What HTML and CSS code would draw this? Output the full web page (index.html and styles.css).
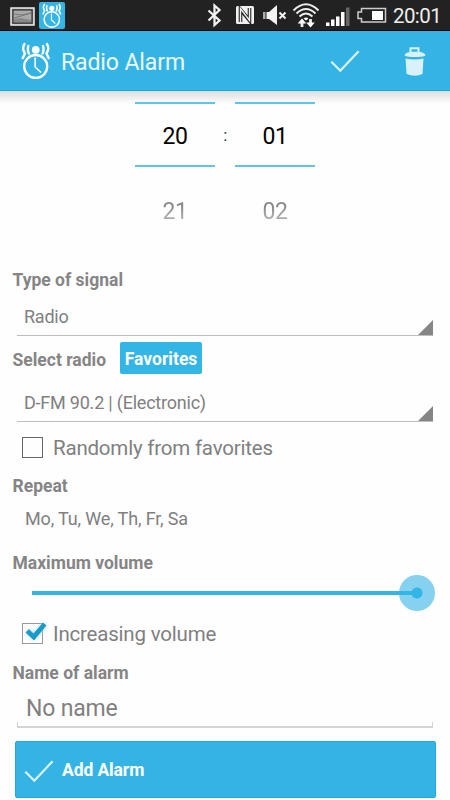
FILE: index.html
```html
<!DOCTYPE html>
<html lang="en">
<head>
<meta charset="utf-8">
<title>Radio Alarm</title>
<link rel="stylesheet" href="styles.css">
</head>
<body>
<svg class="defs" width="0" height="0" aria-hidden="true">
  <symbol id="alarm" viewBox="0 0 30 37">
    <g fill="none" stroke="currentColor" stroke-width="2.4">
      <circle cx="14.7" cy="24.500" r="11.500" stroke-width="2.300"/>
      <path d="M14.200 15.500v9.500l5.800 5.500" stroke-width="1.700"/>
      <path d="M4 1.200Q.2 6 3.900 11.500L1.300 17M7.600 3.200Q5.800 8 8.300 12.500M25.400 1.200Q29.200 6 25.500 11.500L28.100 17M21.800 3.200Q23.600 8 21.100 12.500"/>
    </g>
    <circle cx="14.700" cy="7.800" r="3.900" fill="currentColor"/>
  </symbol>
  <symbol id="check" viewBox="0 0 30 23">
    <path d="M1.300 11.800l9 8.900L28.600 1.300" fill="none" stroke="currentColor" stroke-width="2.300"/>
  </symbol>
</svg>

<header class="status">
  <svg class="picture" width="25" height="19" viewBox="0 0 25 19">
    <rect x="1" y="1" width="23" height="17" fill="#777" stroke="#eee" stroke-width="1.500"/>
    <rect x="3" y="3" width="19" height="13" fill="#aaa" stroke="#222"/>
    <path d="M4 11l7-2 10-3M4 7l8 1 9-2" fill="none" stroke="#777"/>
    <path d="M4 15v-3l7-1 10 2v2z" fill="#888"/>
  </svg>
  <span class="app-badge"><svg width="20" height="25"><use href="#alarm"/></svg></span>
  <svg class="tray" width="190" height="31" viewBox="200 0 190 31">
    <path d="M208.500 10.500l11 10-5 4.500V5.500l5 4.500-11 10.500" fill="none" stroke="#f2f2f2" stroke-width="2.300"/>
    <rect x="236" y="6" width="18" height="18" rx="1.500" fill="#f2f2f2"/>
    <path d="M240.500 22V9.500l9 11V8" fill="none" stroke="#222" stroke-width="3.600"/>
    <path d="M240.500 22V8.500l9 12V8" fill="none" stroke="#f2f2f2" stroke-width="1.400"/>
    <path d="M263 12h2.500v7H263z" fill="#aaa"/>
    <path d="M266.500 12h2.500l8-7v20l-8-6h-2.500z" fill="#f2f2f2"/>
    <path d="M279.500 12.500l6 6m0-6l-6 6" stroke="#f2f2f2" stroke-width="2"/>
    <g fill="none" stroke="#eee" stroke-width="2">
      <path d="M293.500 10.500q12.500-12.500 25 0M296.500 13.500q9.500-9 19 0M299.500 16.500q6.500-6 13 0"/>
      <path d="M302 27v-5M310.500 19v5" stroke-width="2.800"/>
    </g>
    <path d="M303.500 18.500q2.500-2 5 0l-2.500 2zM297.700 23.500l4.300-5 4.300 5zM306.200 22.500l4.300 5 4.300-5z" fill="#fff"/>
    <path d="M326 22.500h3.500V26H326zM331 19.500h3.500V26H331zM336 16.500h3.500V26H336zM341 12h3.500v14H341z" fill="#fff"/>
    <path d="M346 7.500h3.500V26H346z" fill="#666"/>
    <path d="M361.500 8.500h24v13.500h-24v-3.500h-3.500v-6.500h3.500z" fill="none" stroke="#ccc" stroke-width="1.500"/>
    <path d="M372 11h11v9h-11z" fill="#fff"/>
  </svg>
  <span class="clock">20:01</span>
</header>

<nav class="appbar">
  <svg class="logo" width="30" height="37"><use href="#alarm"/></svg>
  <h1>Radio Alarm</h1>
  <svg class="save" width="30" height="23"><use href="#check"/></svg>
  <svg class="trash" width="22" height="30" viewBox="0 0 22 30">
    <path d="M6.500 5V1.200h8V5" fill="none" stroke="#d8f1fb" stroke-width="2"/>
    <path d="M.5 8.500C.5 6 4 4.700 11 4.700S21.500 6 21.500 8.500c-3 2-18 2-21 0z" fill="#d8f1fb"/>
    <path d="M1.500 11.500q9.500 2 18 0L18.500 27q-7.500 3.500-16 0z" fill="#d8f1fb"/>
  </svg>
</nav>

<main>
  <section class="picker">
    <div class="wheel"><div class="current">20</div><div class="next">21</div></div>
    <div class="colon">:</div>
    <div class="wheel"><div class="current">01</div><div class="next">02</div></div>
  </section>

  <h2 class="type-title">Type of signal</h2>
  <div class="spinner type"><span>Radio</span></div>
  <div class="radio-row"><h2>Select radio</h2><button class="favorites">Favorites</button></div>
  <div class="spinner station"><span>D-FM 90.2 | (Electronic)</span></div>
  <label class="option random"><i class="box"></i><span>Randomly from favorites</span></label>
  <h2 class="repeat-title">Repeat</h2>
  <div class="days">Mo, Tu, We, Th, Fr, Sa</div>
  <h2 class="volume-title">Maximum volume</h2>
  <div class="slider"><div class="track"></div><div class="thumb"></div></div>
  <label class="option rising"><i class="box"><svg class="tick" width="26" height="24" viewBox="0 0 26 24"><path d="M4 12.500l3-3 4.500 4.500L21 3l3 2.500L12 20z" fill="#169bcb" stroke="#0b80ad" stroke-width=".6"/></svg></i><span>Increasing volume</span></label>
  <h2 class="name-title">Name of alarm</h2>
  <div class="field">No name</div>
  <button class="add"><svg width="30" height="23"><use href="#check"/></svg><span>Add Alarm</span></button>
</main>
</body>
</html>
```
FILE: styles.css
```css
* { box-sizing: border-box; }
body {
  margin: 0;
  width: 450px;
  height: 800px;
  overflow: hidden;
  background: #fefefe;
  color: #808080;
  font-family: Roboto, "Liberation Sans", sans-serif;
}
svg { display: block; flex: none; }
.defs { position: absolute; }
h1, h2 { margin: 0; }
button { border: 0; font: inherit; padding: 0; }

.status {
  display: flex;
  align-items: center;
  height: 31px;
  padding-left: 10px;
  background: #222;
  border-bottom: 1px solid #180808;
}
.picture { margin-top: 2px; }
.app-badge {
  display: flex;
  align-items: center;
  justify-content: center;
  width: 26px;
  height: 27px;
  margin-left: 4px;
  border-radius: 2px;
  background: #33b5e5;
  color: #fff;
}
.tray { margin-left: 135px; }
.clock { margin-left: 3px; padding-top: 2px; color: #eee; font-size: 20.5px; line-height: 28px; letter-spacing: -.6px; }

.appbar {
  display: flex;
  align-items: center;
  height: 60px;
  padding-left: 21px;
  background: #34b4e5;
  border-bottom: 1px solid #12a9dd;
  color: #d8f1fb;
}
.logo { color: #fff; }
.appbar h1 { width: 249px; margin-left: 10px; padding-top: 4px; font-size: 23px; font-weight: 400; line-height: 30px; letter-spacing: -.1px; color: #eef9fd; }
.save { margin-left: 20px; margin-top: 1px; }
.trash { margin-left: 44px; margin-top: 2px; }

main { height: 709px; background: linear-gradient(#dedede, #fefefe 13px); }
.picker {
  display: flex;
  height: 169px;
  padding: 11px 135px 0;
  font-size: 23px;
  letter-spacing: -.4px;
}
.wheel { width: 80px; text-align: center; }
.current {
  height: 65px;
  border: solid #5dc5e8;
  border-width: 2px 0;
  color: #000;
  line-height: 65px;
}
.next {
  height: 86px;
  line-height: 90px;
  background: linear-gradient(#888 46%, #aaa 58%);
  background-clip: text;
  color: transparent;
}
.colon { width: 20px; text-align: center; color: #333; font-size: 17px; line-height: 66px; }

h2 { padding-left: 12.5px; font-size: 17.5px; font-weight: 700; color: #858585; white-space: nowrap; }
.type-title { height: 40px; line-height: 40px; }
.spinner {
  display: flex;
  justify-content: space-between;
  align-items: flex-end;
  margin: 0 17px;
  padding-left: 7px;
  border-bottom: 1px solid #bdbdbd;
  font-size: 18px;
  letter-spacing: -.22px;
}
.spinner span { align-self: flex-start; }
.spinner::after {
  content: "";
  width: 15px;
  height: 15px;
  background: #858585;
  clip-path: polygon(100% 0, 100% 100%, 0 100%);
}
.type { height: 36px; line-height: 38px; }
.type span { margin-top: -2px; }
.station { height: 44px; line-height: 38px; }
.station span { padding-top: 6px; }
.radio-row { display: flex; align-items: center; height: 42px; padding-top: 5px; line-height: 34px; }
.favorites {
  width: 82px;
  height: 32px;
  margin: -3px 0 0 14px;
  border-radius: 2px;
  background: #33b5e5;
  color: #fff;
  font-size: 17.5px;
  font-weight: 700;
}
.option { display: flex; align-items: center; padding-left: 22px; font-size: 20.5px; letter-spacing: -.2px; }
.option span { padding-top: 1px; }
.box { width: 21px; height: 21px; margin-right: 10px; border: 1px solid #666; position: relative; }
.random { height: 50px; }
.repeat-title { height: 28px; line-height: 29px; }
.days { height: 37px; padding-left: 25px; font-size: 18px; line-height: 37px; letter-spacing: -.15px; }
.volume-title { height: 50px; line-height: 52px; }
.slider { display: flex; align-items: center; height: 37px; margin-top: -13px; padding-left: 32px; }
.track { width: 385px; height: 4px; background: #33b5e5; }
.thumb { width: 36px; height: 36px; margin-left: -18px; border-radius: 50%; background: radial-gradient(circle, #33b5e5 5px, rgba(51, 181, 229, .6) 6px); }
.rising { height: 44px; }
.rising .box { border-color: #999; }
.tick { position: absolute; left: -1px; top: -4px; filter: drop-shadow(0 0 2px #9fe0f7); }
.name-title { height: 33px; line-height: 36px; }
.field {
  height: 40px;
  margin: 0 17px;
  padding-left: 8px;
  font-size: 23px;
  line-height: 42px;
  letter-spacing: -.2px;
  border: solid #d4d4d4;
  border-width: 0 1px 2px;
  border-image: linear-gradient(transparent 34px, #d4d4d4 34px) 1 1 2;
}
.add {
  display: flex;
  align-items: center;
  width: 421px;
  height: 57px;
  margin: 13px 0 0 15px;
  padding-left: 8px;
  border: 1px solid #1cace0;
  border-radius: 2px;
  background: #34b4e5;
  color: #d8f1fb;
  font-size: 17.5px;
  font-weight: 700;
  letter-spacing: -.1px;
}
.add svg { margin-top: 3px; }
.add span { margin-left: 8px; padding-top: 1px; color: #fff; }
```
